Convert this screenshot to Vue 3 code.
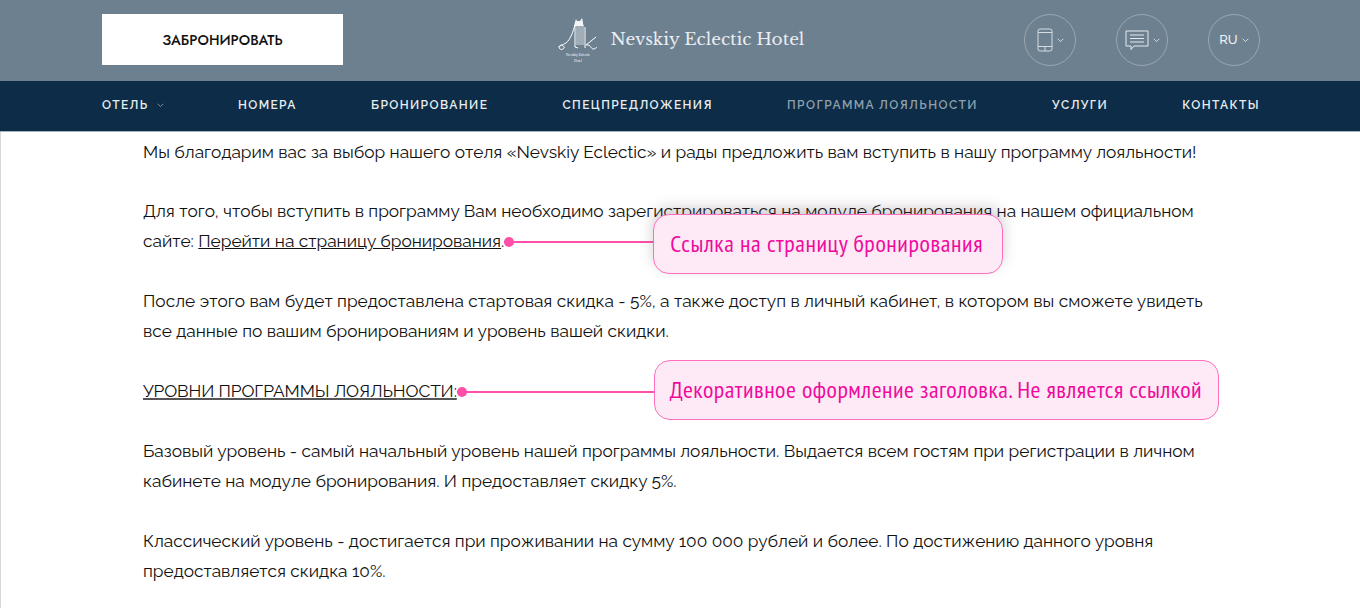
<script setup>
const nav = [
  { t: 'ОТЕЛЬ', caret: true },
  { t: 'НОМЕРА' },
  { t: 'БРОНИРОВАНИЕ' },
  { t: 'СПЕЦПРЕДЛОЖЕНИЯ' },
  { t: 'ПРОГРАММА ЛОЯЛЬНОСТИ', active: true },
  { t: 'УСЛУГИ' },
  { t: 'КОНТАКТЫ' }
]
</script>

<template>
  <div class="page">
    <header class="top">
      <a class="book">ЗАБРОНИРОВАТЬ</a>
      <div class="brand">
        <svg class="logo" width="40" height="50" viewBox="0 0 40 50" fill="none" stroke="#fff">
          <path d="M17 7l1-3 1 2h3l2-3 1 4v2l1 2H16z" fill="#f2f4f6" stroke="none"/>
          <path d="M18 11h8v19h-8z" fill="rgba(255,255,255,.35)" stroke="none"/>
          <path d="M1 32c2-3 6-1 5 1-1 2-5 2-5-1 0-2 4-2 7-4 5-4 7-12 9-18v22l3 1" stroke-width="1"/>
          <path d="M27 12v21M38 22l-10 8c5-1 5 4 7 4 2 0 3-1 4-2" stroke-width="1"/>
          <text x="20" y="41" text-anchor="middle" class="logo-t">Nevskiy Eclectic</text>
          <text x="20" y="47" text-anchor="middle" class="logo-t">Hotel</text>
        </svg>
        <span class="name">Nevskiy Eclectic Hotel</span>
      </div>
      <div class="tools">
        <div class="circle">
          <svg width="16" height="24" viewBox="0 0 16 24" fill="none" stroke="#d5dce1" stroke-width="1">
            <rect x="1" y="1" width="14" height="22" rx="2"/>
            <path d="M1 4.500h14M1 18.500h14M8 18.500V23"/>
          </svg>
          <svg class="chev" width="7" height="5" viewBox="0 0 7 5"><path d="M.7.8 3.500 3.600 6.300.8" fill="none" stroke="#d5dce1"/></svg>
        </div>
        <div class="circle">
          <svg width="24" height="21" viewBox="0 0 24 21" fill="none" stroke="#e6eaee" stroke-width="1">
            <path d="M1 1h22v15H9l-3 3.500V16H1z"/>
            <path d="M5 5h14M5 8.500h14M5 12h14"/>
          </svg>
          <svg class="chev" width="7" height="5" viewBox="0 0 7 5"><path d="M.7.8 3.500 3.600 6.300.8" fill="none" stroke="#d5dce1"/></svg>
        </div>
        <div class="circle">
          <span class="lang">RU</span>
          <svg class="chev" width="7" height="5" viewBox="0 0 7 5"><path d="M.7.8 3.500 3.600 6.300.8" fill="none" stroke="#d5dce1"/></svg>
        </div>
      </div>
    </header>

    <nav class="nav">
      <a v-for="n in nav" :key="n.t" :class="{ active: n.active }">
        {{ n.t }}
        <svg v-if="n.caret" class="caret" width="7" height="5" viewBox="0 0 7 5"><path d="M.7.8 3.500 3.600 6.300.8" fill="none" stroke="#7d8fa0"/></svg>
      </a>
    </nav>

    <main class="content">
      <p>Мы благодарим вас за выбор нашего отеля «Nevskiy Eclectic» и рады предложить вам вступить в нашу программу лояльности!</p>
      <p>Для того, чтобы вступить в программу Вам необходимо зарегистрироваться на модуле бронирования на нашем официальном<br>сайте: <span class="anchor"><u>Перейти на страницу бронирования</u>.<span class="pin pin-a"><span class="box box-a">Ссылка на страницу бронирования</span></span></span></p>
      <p>После этого вам будет предоставлена стартовая скидка - 5%, а также доступ в личный кабинет, в котором вы сможете увидеть<br>все данные по вашим бронированиям и уровень вашей скидки.</p>
      <p><span class="anchor heading"><u>УРОВНИ ПРОГРАММЫ ЛОЯЛЬНОСТИ:</u><span class="pin pin-b"><span class="box box-b">Декоративное оформление заголовка. Не является ссылкой</span></span></span></p>
      <p>Базовый уровень - самый начальный уровень нашей программы лояльности. Выдается всем гостям при регистрации в личном<br>кабинете на модуле бронирования. И предоставляет скидку 5%.</p>
      <p>Классический уровень - достигается при проживании на сумму 100 000 рублей и более. По достижению данного уровня<br>предоставляется скидка 10%.</p>
    </main>
  </div>
</template>

<style>
html, body { margin: 0; background: #fff; overflow: hidden; }
</style>

<style scoped>
.page { width: 1360px; height: 608px; overflow: hidden; font-family: "Raleway", "Montserrat", "Inter", "Noto Sans", sans-serif; box-shadow: inset 1px 0 0 #d8d8d8; }
.top { height: 81px; box-sizing: border-box; background: #6d8090; padding: 14px 100px 0 102px; display: grid; grid-template-columns: 1fr auto 1fr; align-items: start; }
.book { width: 241px; height: 51px; background: #fff; display: flex; align-items: center; justify-content: center; color: #111; font-family: "Jost", "Montserrat", sans-serif; font-size: 14.200px; font-weight: 500; }
.brand { display: flex; align-items: center; gap: 13px; height: 51px; }
.logo-t { font: 3.500px "Liberation Serif", serif; fill: #fff; stroke: none; }
.name { font: 17px "Libre Baskerville", "Liberation Serif", serif; color: #e9edf0; }
.tools { display: flex; justify-content: flex-end; gap: 40px; }
.circle { width: 50px; height: 50px; border: 1px solid #98a7b3; border-radius: 50%; display: flex; align-items: center; justify-content: center; gap: 4px; }
.lang { color: #eef1f3; font-size: 13px; font-weight: 500; margin-top: -2px; }
.nav { height: 48px; padding: 0 100px 2px 102px; background: #0c2c47; display: flex; justify-content: space-between; align-items: center; border-bottom: 1px solid #a9b3bb; }
.nav a { color: #e8ecef; font-size: 12px; font-weight: 600; letter-spacing: 1.400px; display: flex; align-items: center; gap: 8px; }
.nav a.active { color: #8fa0ae; }
.content { padding: 5.600px 143px 0; }
.content p { margin: 0 0 29.930px; font-size: 17.310px; line-height: 29.930px; color: #111; white-space: nowrap; }
.heading { letter-spacing: -.1px; }
.heading u { text-decoration-thickness: 2px; text-decoration-color: #555; }
.anchor { position: relative; }
.pin { position: absolute; left: 100%; top: 50%; height: 2px; background: #ff4fa8; }
.pin::before { content: ""; position: absolute; left: 0; top: -4px; width: 10px; height: 10px; border-radius: 50%; background: #ff4fa8; }
.pin-a { width: 149px; }
.pin-b { width: 197px; }
.box { position: absolute; left: 100%; height: 60px; box-sizing: border-box; display: flex; align-items: center; white-space: nowrap; background: #fdeaf6; border: 1px solid #ff6fbd; border-radius: 16px; color: #ef0a9d; font-family: "PT Sans Narrow", "PT Sans", sans-serif; font-size: 24px; letter-spacing: .5px; padding-left: 15px; }
.box-a { top: -27px; width: 350px; padding-left: 16px; letter-spacing: .6px; box-shadow: 0 -6px 14px rgba(80,60,70,.25); }
.box-b { top: -31px; width: 565px; }
</style>
